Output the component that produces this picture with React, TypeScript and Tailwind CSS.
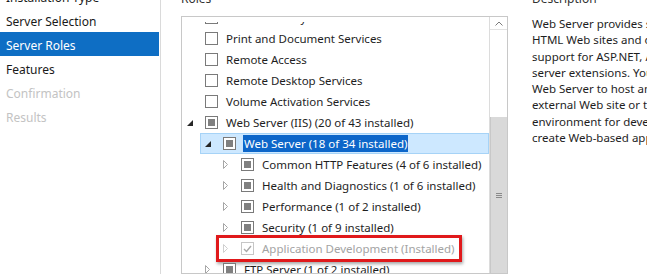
import React from 'react';

type Box = 'empty' | 'partial' | 'checked';
type Exp = 'open' | 'closed' | null;

interface RoleRow {
  label: string;
  level: number;
  exp: Exp;
  box: Box;
  selected?: boolean;
  disabled?: boolean;
  flagged?: boolean;
}

const navItems = [
  { label: 'Installation Type', state: 'done' },
  { label: 'Server Selection', state: 'done' },
  { label: 'Server Roles', state: 'active' },
  { label: 'Features', state: 'done' },
  { label: 'Confirmation', state: 'off' },
  { label: 'Results', state: 'off' },
];

const roles: RoleRow[] = [
  { label: 'Network Policy and Access Services', level: 0, exp: null, box: 'empty' },
  { label: 'Print and Document Services', level: 0, exp: null, box: 'empty' },
  { label: 'Remote Access', level: 0, exp: null, box: 'empty' },
  { label: 'Remote Desktop Services', level: 0, exp: null, box: 'empty' },
  { label: 'Volume Activation Services', level: 0, exp: null, box: 'empty' },
  { label: 'Web Server (IIS) (20 of 43 installed)', level: 0, exp: 'open', box: 'partial' },
  { label: 'Web Server (18 of 34 installed)', level: 1, exp: 'open', box: 'partial', selected: true },
  { label: 'Common HTTP Features (4 of 6 installed)', level: 2, exp: 'closed', box: 'partial' },
  { label: 'Health and Diagnostics (1 of 6 installed)', level: 2, exp: 'closed', box: 'partial' },
  { label: 'Performance (1 of 2 installed)', level: 2, exp: 'closed', box: 'partial' },
  { label: 'Security (1 of 9 installed)', level: 2, exp: 'closed', box: 'partial' },
  { label: 'Application Development (Installed)', level: 2, exp: 'closed', box: 'checked', disabled: true, flagged: true },
  { label: 'FTP Server (1 of 2 installed)', level: 1, exp: 'closed', box: 'partial' },
];

const indent = ['pl-0', 'pl-[18px]', 'pl-[36px]'];

const description = [
  'Web Server provides support for',
  'HTML Web sites and optional',
  'support for ASP.NET, ASP, and Web',
  'server extensions. You can use the',
  'Web Server to host an internal or',
  'external Web site or to provide an',
  'environment for developers to',
  'create Web-based applications.',
];

const Expander = ({ exp, disabled }: { exp: Exp; disabled?: boolean }) => {
  if (exp === 'open') {
    return (
      <svg width="6" height="6" viewBox="0 0 6 6" className="ml-[4px]">
        <polygon points="6,0 6,6 0,6" fill="#262626" />
      </svg>
    );
  }
  if (exp === 'closed') {
    return (
      <svg width="6" height="9" viewBox="0 0 6 9" className="ml-[4px]">
        <polygon points="0.5,0.5 4.5,4.5 0.5,8.5" fill="none" stroke={disabled ? '#cfcfcf' : '#a6a6a6'} />
      </svg>
    );
  }
  return null;
};

const CheckBox = ({ box, disabled }: { box: Box; disabled?: boolean }) => {
  if (box === 'checked') {
    return (
      <div className="flex h-[13px] w-[13px] shrink-0 items-center justify-center border border-[#c6c6c6] bg-white">
        <svg width="9" height="8" viewBox="0 0 9 8">
          <polyline points="1,4 3.5,6.5 8,1" fill="none" stroke={disabled ? '#a8a8a8' : '#333'} strokeWidth="1.4" />
        </svg>
      </div>
    );
  }
  return (
    <div className="flex h-[13px] w-[13px] shrink-0 items-center justify-center border border-[#7a7a7a] bg-white">
      {box === 'partial' && <div className="h-[7px] w-[7px] bg-[#808080]" />}
    </div>
  );
};

const App: React.FC = () => {
  return (
    <div
      className="flex h-[274px] w-[647px] overflow-hidden bg-white text-[#1e1e1e]"
      style={{ fontFamily: '"Segoe UI", "Noto Sans", sans-serif' }}
    >
      {/* Wizard steps */}
      <div className="w-[161px] shrink-0 border-r border-[#dadada]">
        <div className="-mt-[16px] pr-[1px]">
          {navItems.map((item) => (
            <div
              key={item.label}
              className={
                item.state === 'active'
                  ? 'h-[24px] bg-[#0e6ec4] pl-[6px] pt-[3px] text-[12px] leading-[21px] text-white'
                  : item.state === 'off'
                  ? 'h-[24px] pl-[6px] pt-[3px] text-[12px] leading-[21px] text-[#c3c3c3]'
                  : 'h-[24px] pl-[6px] pt-[3px] text-[12px] leading-[21px] text-[#1a1a1a]'
              }
            >
              {item.label}
            </div>
          ))}
        </div>
      </div>

      {/* Roles */}
      <div className="flex w-[347px] shrink-0 flex-col pl-[20px]">
        <div className="-mt-[9px] text-[12px] leading-[16px] text-[#333]">Roles</div>
        <div className="mt-[9px] flex h-[300px] w-[327px] overflow-hidden border border-[#c8c8c8]">
          <div className="flex-1 pt-[5px]">
            <div className="h-full overflow-hidden">
              <div className="-mt-[15px]">
                {roles.map((row) => (
                  <div key={row.label} className={`relative flex h-[21px] ${indent[row.level]}`}>
                    <div
                      className={
                        row.selected
                          ? 'flex flex-1 items-center border border-[#a6d3f7] bg-[#cde8ff]'
                          : 'flex flex-1 items-center border border-transparent'
                      }
                    >
                      <div className="flex h-full w-[22px] shrink-0 items-center">
                        <Expander exp={row.exp} disabled={row.disabled} />
                      </div>
                      <CheckBox box={row.box} disabled={row.disabled} />
                      <span
                        className={
                          row.selected
                            ? 'ml-[7px] whitespace-nowrap bg-[#0d66c9] px-[1px] text-[11.5px] leading-[17px] text-white'
                            : row.disabled
                            ? 'ml-[8px] whitespace-nowrap text-[11.5px] text-[#a3a3a3]'
                            : 'ml-[8px] whitespace-nowrap text-[11.5px] text-[#1e1e1e]'
                        }
                      >
                        {row.label}
                      </span>
                    </div>
                    {row.flagged && (
                      <div className="absolute -top-[3px] -bottom-[3px] left-[34px] w-[246px] border-[3px] border-[#e0191b] shadow-[1px_2px_3px_rgba(0,0,0,0.35)]" />
                    )}
                  </div>
                ))}
              </div>
            </div>
          </div>
          {/* Scrollbar */}
          <div className="flex w-[18px] shrink-0 flex-col border-l border-[#dcdcdc] bg-[#f4f4f4]">
            <div className="flex h-[16px] items-center justify-center border-b border-[#e2e2e2] bg-white">
              <svg width="8" height="5" viewBox="0 0 8 5">
                <polyline points="0.5,4.5 4,1 7.5,4.5" fill="none" stroke="#7a7a7a" />
              </svg>
            </div>
            <div className="h-[107px] bg-white" />
            <div className="flex h-[192px] items-center justify-center border-l border-[#c8c8c8] bg-[#d9d9d9]">
              <div className="flex w-[6px] flex-col gap-[1px]">
                <div className="h-[1px] bg-[#8a8a8a]" />
                <div className="h-[1px] bg-[#8a8a8a]" />
                <div className="h-[1px] bg-[#8a8a8a]" />
              </div>
            </div>
          </div>
        </div>
      </div>

      {/* Description */}
      <div className="flex flex-1 flex-col pl-[24px]">
        <div className="-mt-[9px] whitespace-nowrap text-[12px] leading-[16px] text-[#333]">Description</div>
        <div className="mt-[9px] text-[11.5px] leading-[16.3px] text-[#1e1e1e]">
          {description.map((line) => (
            <div key={line} className="whitespace-nowrap">
              {line}
            </div>
          ))}
        </div>
      </div>
    </div>
  );
};

export default App;
